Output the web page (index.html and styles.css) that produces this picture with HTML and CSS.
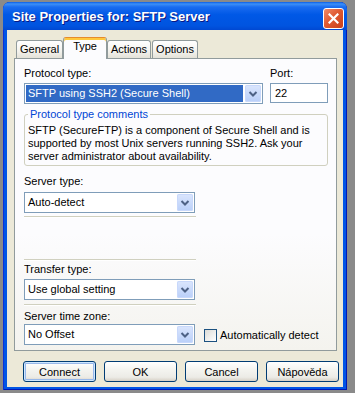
FILE: index.html
```html
<!DOCTYPE html>
<html lang="cs">
<head>
    <meta charset="UTF-8">
    <title>Site Properties for: SFTP Server</title>
    <link rel="stylesheet" href="styles.css">
</head>
<body>

    <div class="window">
        <div class="titlebar">
            <span class="title">Site Properties for: SFTP Server</span>
            <button class="close-btn">
                <svg width="11" height="11" viewBox="0 0 11 11">
                    <path d="M1.5 1.5 L9.5 9.5 M9.5 1.5 L1.5 9.5" stroke="#fff" stroke-width="2.2" stroke-linecap="square"/>
                </svg>
            </button>
        </div>

        <div class="client">
            <div class="tabs">
                <span class="tab">General</span>
                <span class="tab active">Type</span>
                <span class="tab">Actions</span>
                <span class="tab">Options</span>
            </div>

            <div class="panel">
                <div class="top-row">
                    <div class="field">
                        <label>Protocol type:</label>
                        <div class="combo selected">
                            <span class="value">SFTP using SSH2 (Secure Shell)</span>
                            <span class="drop"><svg width="16" height="17" viewBox="0 0 16 17"><polyline points="4.5,7 8,10.5 11.5,7" fill="none" stroke="#4D6185" stroke-width="2"/></svg></span>
                        </div>
                    </div>
                    <div class="field">
                        <label>Port:</label>
                        <div class="textbox">22</div>
                    </div>
                </div>

                <fieldset class="group">
                    <legend>Protocol type comments</legend>
                    <p>SFTP (SecureFTP) is a component of Secure Shell and is supported by most Unix servers running SSH2. Ask your server administrator about availability.</p>
                </fieldset>

                <div class="lower">
                    <label class="server-label">Server type:</label>
                    <div class="combo narrow">
                        <span class="value">Auto-detect</span>
                        <span class="drop"><svg width="16" height="17" viewBox="0 0 16 17"><polyline points="4.5,7 8,10.5 11.5,7" fill="none" stroke="#4D6185" stroke-width="2"/></svg></span>
                    </div>
                    <div class="sep first"></div>
                    <div class="sep second"></div>

                    <label class="transfer-label">Transfer type:</label>
                    <div class="combo narrow">
                        <span class="value">Use global setting</span>
                        <span class="drop"><svg width="16" height="17" viewBox="0 0 16 17"><polyline points="4.5,7 8,10.5 11.5,7" fill="none" stroke="#4D6185" stroke-width="2"/></svg></span>
                    </div>
                    <div class="sep third"></div>

                    <label class="zone-label">Server time zone:</label>
                    <div class="zone-row">
                        <div class="combo narrow">
                            <span class="value">No Offset</span>
                            <span class="drop"><svg width="16" height="17" viewBox="0 0 16 17"><polyline points="4.5,7 8,10.5 11.5,7" fill="none" stroke="#4D6185" stroke-width="2"/></svg></span>
                        </div>
                        <span class="checkbox"></span>
                        <span class="check-label">Automatically detect</span>
                    </div>
                </div>
            </div>

            <div class="buttons">
                <button class="btn default">Connect</button>
                <button class="btn">OK</button>
                <button class="btn">Cancel</button>
                <button class="btn">Nápověda</button>
            </div>
        </div>
    </div>

</body>
</html>
```

FILE: styles.css
```css
* {
    margin: 0;
    padding: 0;
    box-sizing: border-box;
}

body {
    font-family: Tahoma, "Liberation Sans", Arial, sans-serif;
    font-size: 11px;
    color: #000;
    background-color: #8a8a8a;
    width: 355px;
    height: 393px;
    overflow: hidden;
}

.window {
    margin: 2px 0 0 3px;
    width: 344px;
    height: 388px;
    background-color: #0055e5;
    border-radius: 7px 7px 0 0;
    box-shadow: inset 1px 0 #0831d9, inset -1px 0 #0019b8, inset 0 -1px #0019b8;
    padding: 0 4px 3px;
    display: flex;
    flex-direction: column;
}

/* Title bar */
.titlebar {
    margin: 0 -4px;
    height: 28px;
    border-radius: 7px 7px 0 0;
    background: linear-gradient(#0a5ee8 0, #3d90f7 2px, #1a6cf0 5px, #0058e6 45%, #0054e0 85%, #0048d2 100%);
    display: flex;
    align-items: center;
    justify-content: space-between;
    padding: 1px 3px 0 9px;
}

.title {
    color: #fff;
    font-weight: bold;
    font-size: 13px;
    font-family: "Liberation Sans", Arial, sans-serif;
    text-shadow: 1px 1px #0a1883;
}

.close-btn {
    width: 21px;
    height: 21px;
    border: 1px solid #fff;
    border-radius: 3px;
    background: linear-gradient(135deg, #f08a68 0%, #e05a32 45%, #c8401a 100%);
    display: flex;
    align-items: center;
    justify-content: center;
    margin-top: 3px;
}

/* Dialog body */
.client {
    height: 357px;
    background-color: #ece9d8;
    padding-top: 7px;
}

.tabs {
    display: flex;
    align-items: flex-end;
    height: 21px;
    padding-left: 9px;
}

.tab {
    height: 18px;
    line-height: 16px;
    padding: 0 3px;
    margin-right: 1px;
    border: 1px solid #919b9c;
    border-bottom: none;
    border-radius: 3px 3px 0 0;
    background: linear-gradient(#ffffff, #f3f2ed 60%, #e4e2d8);
}

.tab.active {
    position: relative;
    z-index: 1;
    height: 22px;
    margin: 0 0 -1px -1px;
    padding: 0 9px;
    line-height: 17px;
    background: #fcfcfe;
    border-top: 1px solid #e68b2c;
    box-shadow: inset 0 2px #ffc83c;
}

.panel {
    margin: 0 6px 0 7px;
    height: 293px;
    border: 1px solid #919b9c;
    background: linear-gradient(#fcfcfe 60%, #f4f3ee);
    padding: 8px 8px 0 9px;
}

label {
    display: block;
    line-height: 13px;
    margin-bottom: 3px;
}

.top-row {
    display: grid;
    grid-template-columns: 1fr 58px;
    gap: 7px;
}

/* Combo box */
.combo {
    height: 21px;
    border: 1px solid #7f9db9;
    background: #fff;
    display: flex;
    align-items: center;
    padding: 1px;
}

.combo .value {
    flex: 1;
    height: 17px;
    line-height: 17px;
    padding-left: 2px;
    margin-right: 2px;
    white-space: nowrap;
}

.combo.selected .value {
    background: #316ac5;
    color: #fff;
}

.combo .drop {
    width: 16px;
    height: 17px;
    border-radius: 2px;
    background: linear-gradient(#dbe6fd, #b9cff9);
    box-shadow: inset 0 0 0 1px #c8d8fb;
}

.combo .drop svg {
    display: block;
}

.combo.narrow {
    width: 171px;
}

.textbox {
    height: 20px;
    border: 1px solid #7f9db9;
    background: #fff;
    line-height: 18px;
    padding-left: 4px;
}

/* Group box */
.group {
    margin-top: 4px;
    border: 1px solid #d0d0bf;
    border-radius: 3px;
    padding: 3px 3px 2px 3px;
}

.group legend {
    color: #0046d5;
    padding: 0 2px;
    line-height: 13px;
}

.group p {
    line-height: 13px;
}

/* Lower settings */
.server-label {
    margin-top: 9px;
    margin-bottom: 4px;
}

.sep {
    width: 172px;
    border-top: 1px solid #d0d0bf;
    border-bottom: 1px solid #fff;
}

.sep.first {
    margin-top: 3px;
}

.sep.second {
    margin-top: 41px;
}

.transfer-label {
    margin-top: 2px;
}

.sep.third {
    margin-top: 4px;
}

.zone-label {
    margin-top: 4px;
    margin-bottom: 1px;
}

.zone-row {
    display: flex;
    align-items: center;
}

.checkbox {
    width: 13px;
    height: 13px;
    margin: 1px 3px 0 9px;
    border: 1px solid #1c5180;
    background: linear-gradient(135deg, #dcdcd7, #fff);
}

/* Buttons */
.buttons {
    display: flex;
    gap: 8px;
    padding: 10px 0 0 16px;
}

.btn {
    width: 73px;
    height: 21px;
    font-family: inherit;
    font-size: 11px;
    color: #000;
    border: 1px solid #003c74;
    border-radius: 3px;
    background: linear-gradient(#ffffff, #f4f4f0 40%, #ecebe6 80%, #d6d0c5);
}

.btn.default {
    box-shadow: inset 0 0 0 1px #cee7ff, inset 0 0 0 2px #98b8ea;
}
```
